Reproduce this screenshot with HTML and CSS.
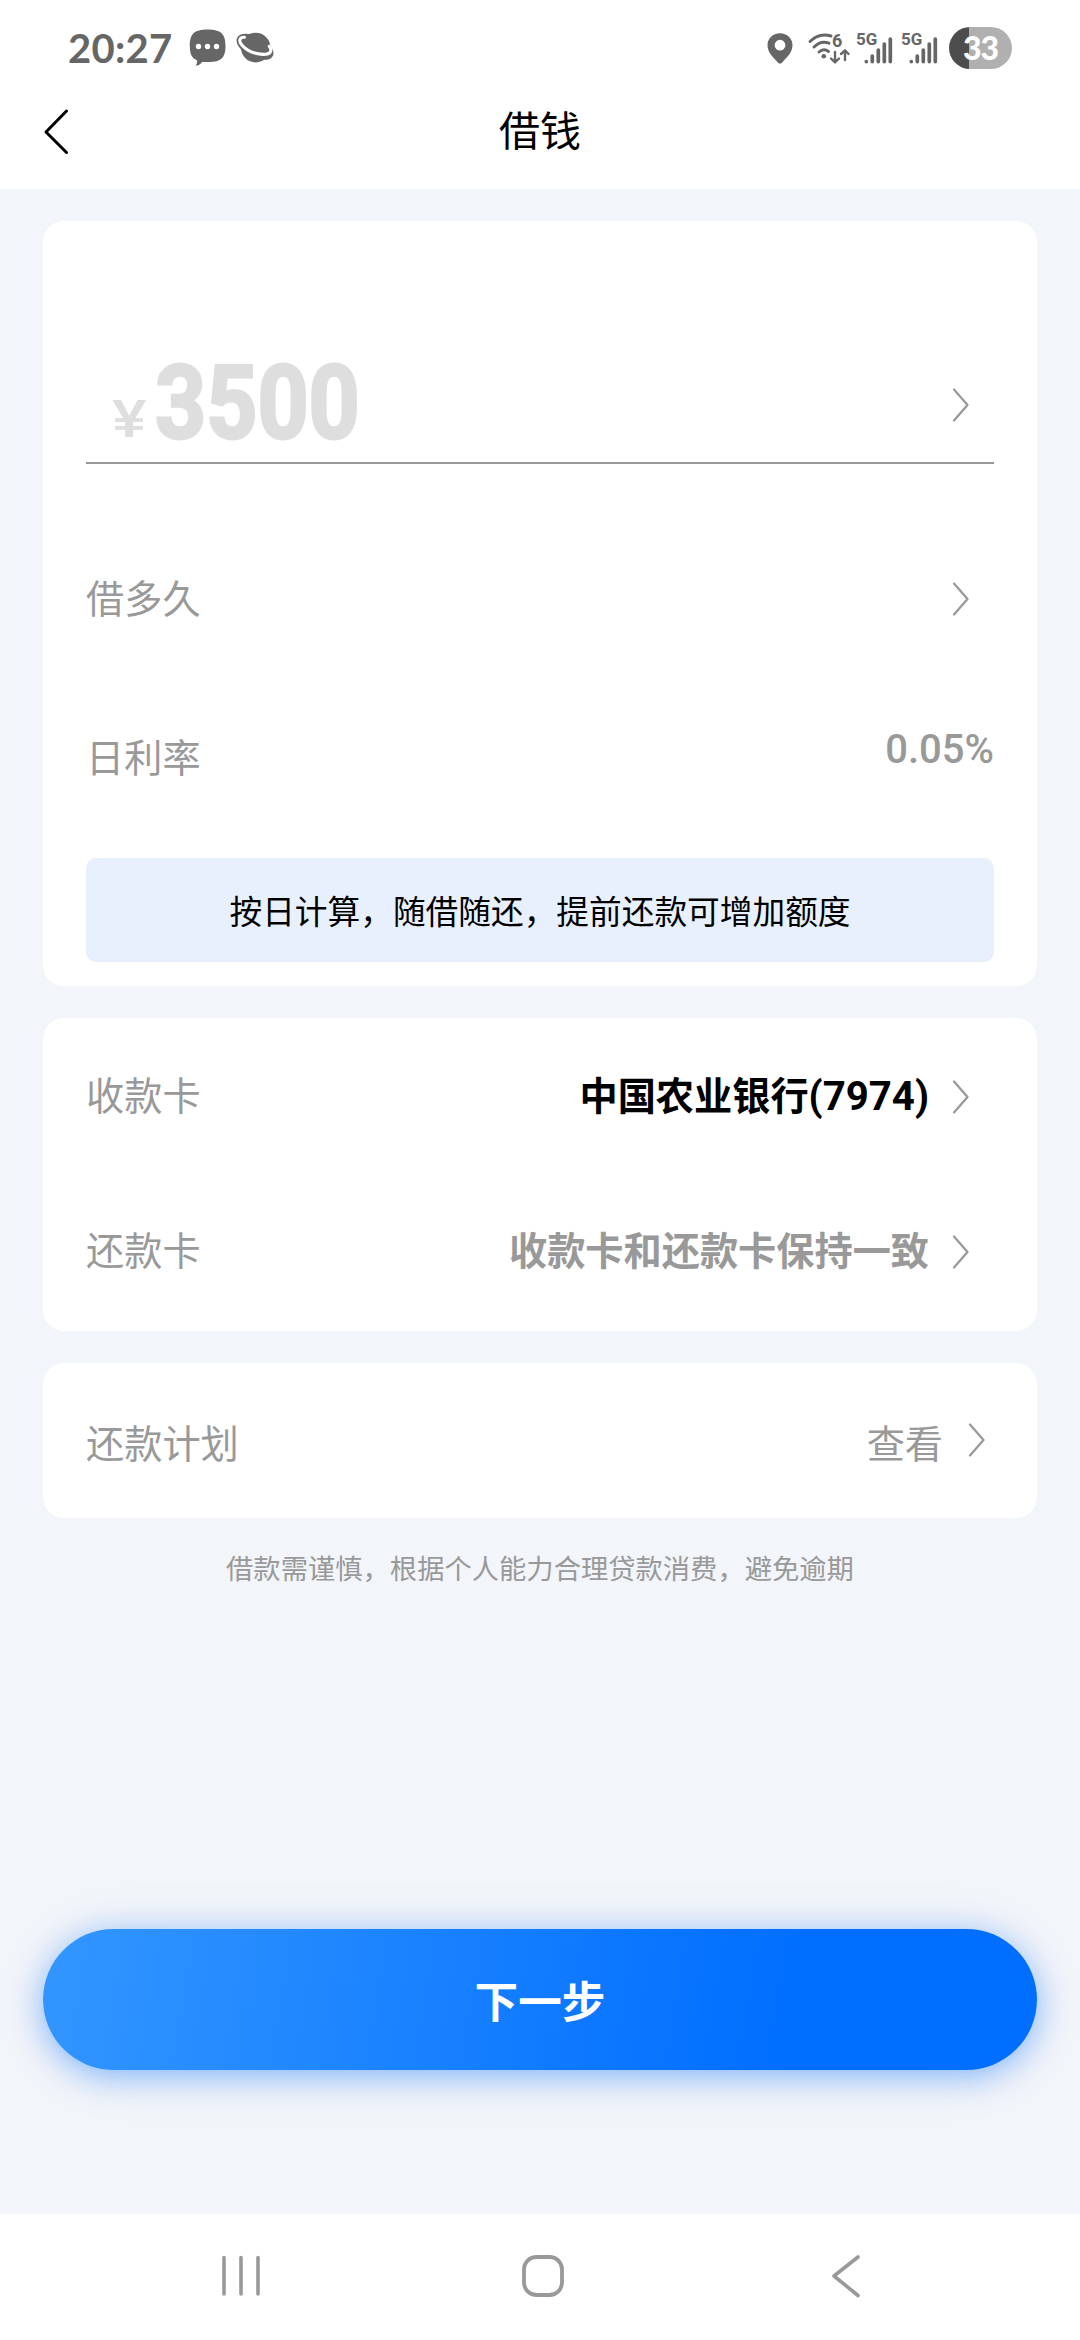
FILE: index.html
```html
<!DOCTYPE html>
<html lang="zh-CN">
<head>
<meta charset="utf-8">
<title>借钱</title>
<link rel="stylesheet" href="styles.css">
</head>
<body>
<div class="status">
  <span class="time">20:27</span>
  <svg class="chat" width="37" height="38" viewBox="0 0 37 38"><path fill="#666" d="M18.500.5C32 .5 36.500 5 36.500 17S32 33 20 33H13C11.500 35.500 9.500 36.800 6.500 36.500 8 35 8.300 33.500 8 31.300 2.500 29 .8 24.500.8 17 .8 5 5 .5 18.500.5Z"/><g fill="#fff"><circle cx="9.500" cy="17.500" r="2.700"/><circle cx="18.500" cy="17.500" r="2.700"/><circle cx="27.500" cy="17.500" r="2.700"/></g></svg>
  <svg class="planet" width="39" height="32" viewBox="0 0 39 32"><circle cx="19.700" cy="15.600" r="14.800" fill="#666"/><ellipse cx="19" cy="14.800" rx="20" ry="10.500" transform="rotate(27 19 14.800)" fill="#666"/><path fill="none" stroke="#fff" stroke-width="3.100" stroke-linecap="round" stroke-linejoin="round" d="M8.500 5.200C2.500 5.200 2.700 9.500 6.500 13.700 11.500 19 19.500 22.200 27.500 22.400 35 22.300 36.500 18.500 33.300 14.200"/></svg>
  <div class="indicators">
    <svg class="pin" width="26" height="31" viewBox="0 0 26 31"><path fill="#666" fill-rule="evenodd" d="M13 .3C5.800.3.500 5.600.500 12.300.500 20 7 25 10.500 29.300Q13 32 15.500 29.300C19 25 25.500 20 25.500 12.300 25.500 5.600 20.200.3 13 .3ZM13 6.800A5.400 5.400 0 1 1 13 17.600 5.400 5.400 0 1 1 13 6.800Z"/></svg>
    <svg class="wifi" width="41" height="31" viewBox="0 0 41 31"><g fill="none" stroke="#666" stroke-width="2.900" stroke-linecap="round" stroke-linejoin="round"><path d="M2 8.500Q11-.5 23 3M6 14Q13 7 21 10.200M11 19Q15.500 14.800 20.500 18.500"/><path d="M27 19V29M23 25.500 27 29.300 31 25.500M37 27V17.500M33 21 37 17.300 40.500 21" stroke-width="2.400"/></g><circle cx="15.800" cy="23.300" r="2.300" fill="#666"/><text class="tiny-six" x="24" y="13.500">6</text></svg>
    <svg class="signal" width="37" height="31" viewBox="0 0 37 31"><text class="tiny" x="0" y="12">5G</text><path stroke="#666" stroke-width="3.700" stroke-linecap="round" d="M10.300 28.500V28.600M16.300 23V28.600M22.300 17V28.600M28.300 11V28.600M34.300 6V28.600"/></svg>
    <svg class="signal" width="37" height="31" viewBox="0 0 37 31"><text class="tiny" x="0" y="12">5G</text><path stroke="#666" stroke-width="3.700" stroke-linecap="round" d="M10.300 28.500V28.600M16.300 23V28.600M22.300 17V28.600M28.300 11V28.600M34.300 6V28.600"/></svg>
    <div class="battery">33</div>
  </div>
</div>
<header class="header">
  <svg class="back" width="24" height="46" viewBox="0 0 24 46"><path fill="none" stroke="#000" stroke-width="3" stroke-linecap="round" stroke-linejoin="round" d="M23.500 2 3 23 23.500 43.500"/></svg>
  <h1 class="title">借钱</h1>
</header>
<main class="main">
  <section class="card loan">
    <div class="amount">
      <span class="yen">¥</span><span class="sum">3500</span>
      <svg class="chevron" viewBox="0 0 16 34"><path d="M1 1.500 14.500 17 1 32.500"/></svg>
    </div>
    <div class="row term"><span>借多久</span><svg class="chevron" viewBox="0 0 16 34"><path d="M1 1.500 14.500 17 1 32.500"/></svg></div>
    <div class="row rate"><span>日利率</span><span class="percent">0.05%</span></div>
    <div class="notice">按日计算，随借随还，提前还款可增加额度</div>
  </section>
  <section class="card banks">
    <div class="row bank"><span>收款卡</span><b class="account">中国农业银行<span class="tail">(7974)</span></b><svg class="chevron" viewBox="0 0 16 34"><path d="M1 1.500 14.500 17 1 32.500"/></svg></div>
    <div class="row bank"><span>还款卡</span><b>收款卡和还款卡保持一致</b><svg class="chevron" viewBox="0 0 16 34"><path d="M1 1.500 14.500 17 1 32.500"/></svg></div>
  </section>
  <section class="card plan">
    <div class="row"><span>还款计划</span><span class="view">查看</span><svg class="chevron" viewBox="0 0 16 34"><path d="M1 1.500 14.500 17 1 32.500"/></svg></div>
  </section>
  <p class="caution">借款需谨慎，根据个人能力合理贷款消费，避免逾期</p>
  <button class="next">下一步</button>
</main>
<nav class="nav">
  <svg class="recent" width="40" height="44" viewBox="0 0 40 44"><path stroke="#999" stroke-width="3.600" stroke-linecap="round" d="M3 3.500V40M20 3.500V40M37 3.500V40"/></svg>
  <svg class="home" width="44" height="44" viewBox="0 0 44 44"><rect x="3" y="3" width="38" height="38" rx="12.500" fill="none" stroke="#999" stroke-width="3.800"/></svg>
  <svg class="return" width="30" height="44" viewBox="0 0 30 44"><path fill="none" stroke="#999" stroke-width="3.600" stroke-linecap="round" stroke-linejoin="round" d="M27 3 3 22 27 41.500"/></svg>
</nav>
</body>
</html>
```
FILE: styles.css
```css
* { box-sizing: border-box; }
body {
  margin: 0;
  width: 1080px;
  height: 2340px;
  display: flex;
  flex-direction: column;
  overflow: hidden;
  background: #f2f5fa;
  color: #999;
  font: 38.2px/56px Roboto, "Noto Sans CJK SC", sans-serif;
}
svg { display: block; flex: none; overflow: visible; }
.status {
  height: 96px;
  display: flex;
  align-items: center;
  padding: 0 68px;
  background: #fff;
}
.time {
  width: 121px;
  font: 700 40px/56px Lato, sans-serif;
  letter-spacing: 0.3px;
  color: #666;
}
.planet { margin-left: 10px; }
.indicators {
  margin-left: auto;
  display: flex;
  align-items: center;
}
.wifi { margin-left: 15px; }
.signal { margin-left: 8px; }
.wifi + .signal { margin-left: 7px; }
.tiny { font: 700 17px Roboto, sans-serif; fill: #666; }
.tiny-six { font: 700 18px Roboto, sans-serif; fill: #666; }
.battery {
  width: 63px;
  height: 42px;
  margin-left: 11px;
  border-radius: 21px;
  background: linear-gradient(90deg, #4d4d4d 20px, #b0b0b0 20px);
  color: #fff;
  font: 900 32px/42px Lato, sans-serif;
  letter-spacing: -1px;
  text-align: center;
}
.header {
  height: 93px;
  display: grid;
  grid-template-columns: 1fr auto 1fr;
  padding: 0 43px;
  background: #fff;
}
.back { margin-top: 13px; }
.title {
  margin: 8px 0 0;
  font-size: 41px;
  line-height: 56px;
  font-weight: 400;
  color: #000;
}
.main {
  flex: 1;
  display: flex;
  flex-direction: column;
  padding: 32px 43px 0;
}
.card {
  padding: 0 43px;
  border-radius: 21px;
  background: #fff;
}
.row { display: flex; align-items: center; }
.row > :nth-child(2) { margin-left: auto; }
.chevron {
  width: 16px;
  height: 34px;
  fill: none;
  stroke: #999;
  stroke-width: 2.300;
  stroke-linecap: round;
  stroke-linejoin: round;
}
.loan { height: 765px; margin-bottom: 32px; }
.amount {
  height: 243px;
  display: flex;
  align-items: flex-end;
  padding: 0 25px 4px 26px;
  border-bottom: 2px solid #999;
  color: #dedede;
  font-weight: 700;
}
.yen {
  width: 43px;
  margin-bottom: 8px;
  font-size: 52px;
  line-height: 60px;
  font-weight: 500;
  transform: scaleX(1.25);
  transform-origin: left;
}
.sum {
  font-size: 102px;
  line-height: 110px;
  -webkit-text-stroke: 3px #dedede;
  transform: scaleX(0.875);
  transform-origin: left;
}
.amount .chevron { margin: 0 0 36px auto; }
.term { height: 58px; margin-top: 107px; padding-right: 25px; }
.term .chevron { margin-bottom: 2px; }
.rate { height: 58px; margin-top: 101px; }
.percent { font-size: 40px; font-weight: 500; padding-bottom: 19px; }
.notice {
  height: 104px;
  margin-top: 70px;
  border-radius: 10px;
  background: #e8f0fd;
  color: #000;
  font-size: 32.700px;
  line-height: 111px;
  text-align: center;
}
.banks { height: 313px; padding-top: 1px; margin-bottom: 32px; }
.bank { height: 155px; padding-right: 25px; }
.bank b { margin-right: 24px; }
.account { color: #000; }
.tail { font-size: 40.200px; }
.plan { height: 155px; }
.plan .row { height: 163px; padding-right: 9px; }
.view { margin-right: 26px; }
.plan .chevron { margin-bottom: 10px; }
.caution {
  margin: 24px 0 0;
  font-size: 27.300px;
  line-height: 56px;
  text-align: center;
}
.next {
  height: 141px;
  margin-top: 331px;
  padding: 8px 0 0;
  border: 0;
  border-radius: 71px;
  background: linear-gradient(100deg, #3396ff 0%, #006eff 75%);
  box-shadow: 0 6px 32px rgba(0, 110, 255, 0.45), 0 4px 70px rgba(0, 60, 140, 0.05);
  color: #fff;
  font: 700 43.600px/60px Roboto, "Noto Sans CJK SC", sans-serif;
}
.nav {
  height: 126px;
  display: flex;
  gap: 260px;
  padding: 40px 0 0 221px;
  background: #fff;
}
.return { margin-left: 6px; }
```
